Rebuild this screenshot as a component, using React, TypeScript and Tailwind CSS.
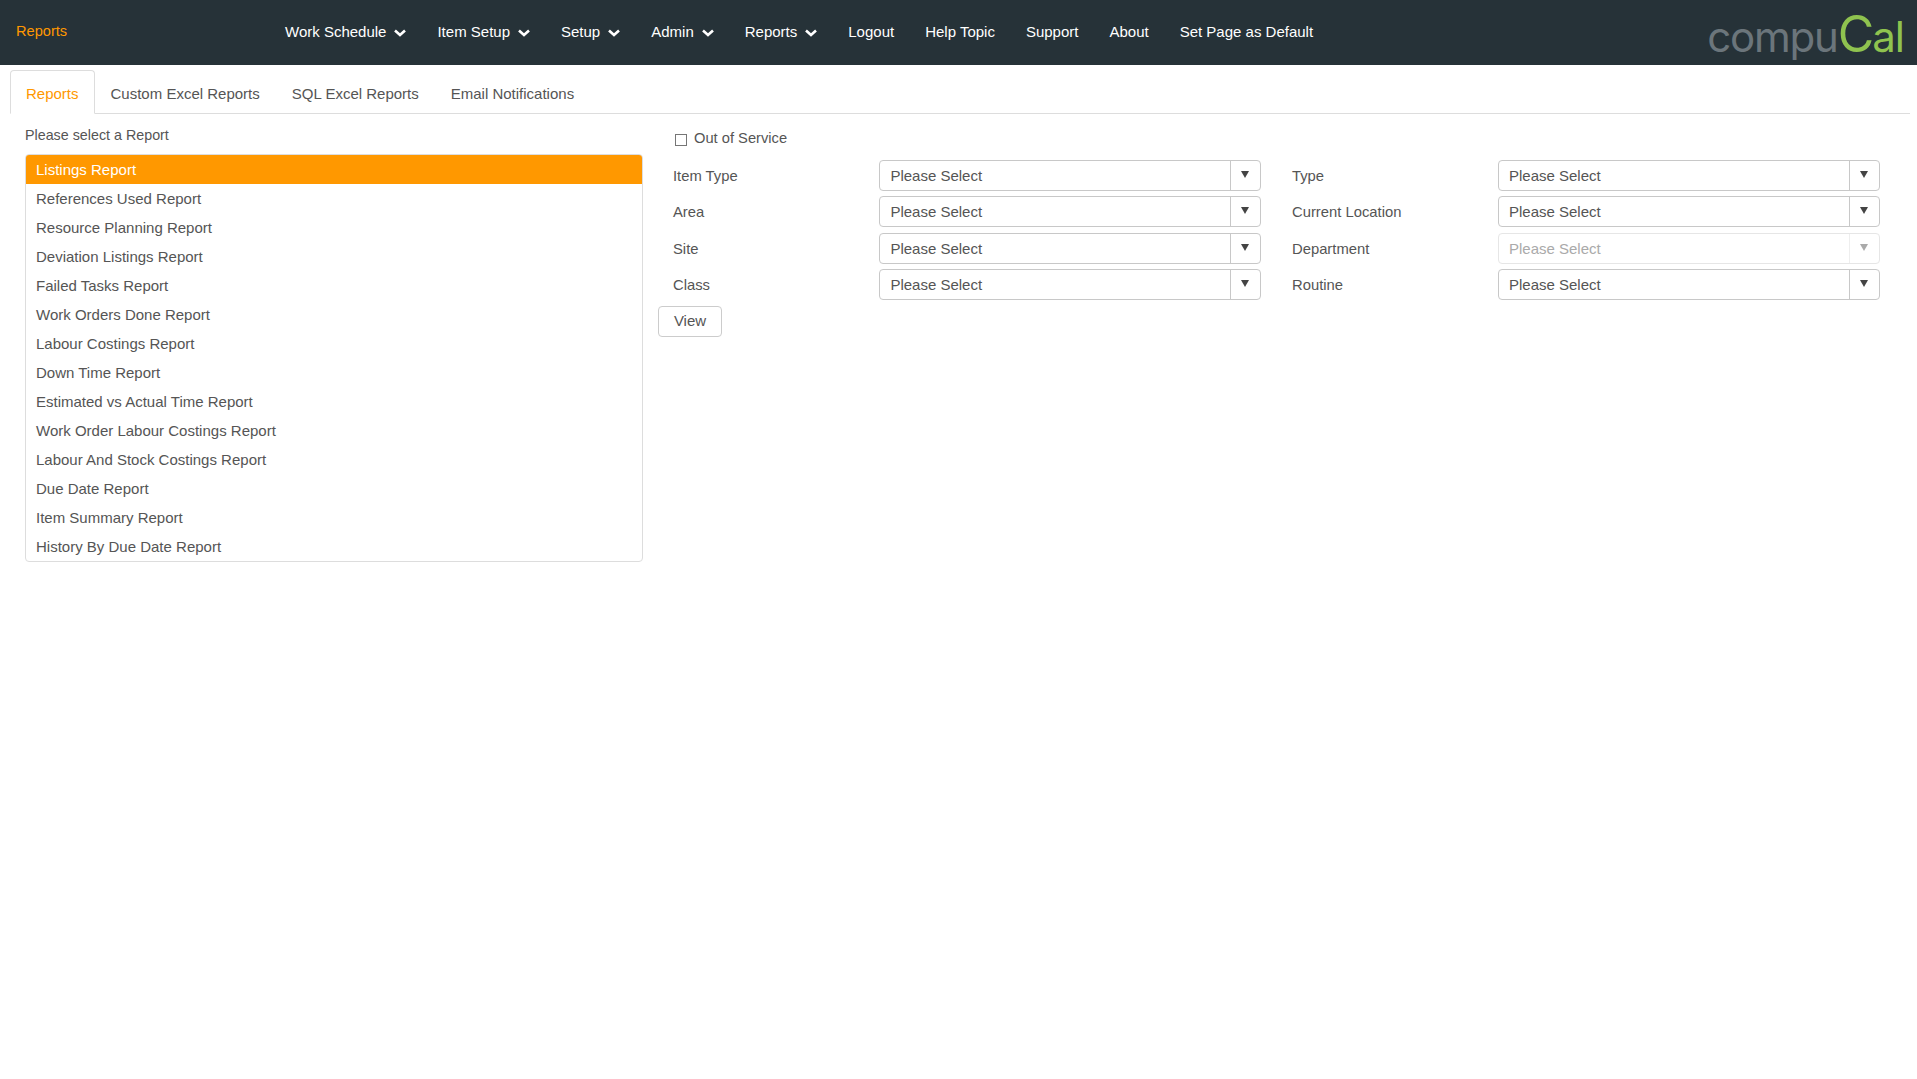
import React from 'react';

const NAV: { label: string; menu?: boolean }[] = [
  { label: 'Work Schedule', menu: true },
  { label: 'Item Setup', menu: true },
  { label: 'Setup', menu: true },
  { label: 'Admin', menu: true },
  { label: 'Reports', menu: true },
  { label: 'Logout' },
  { label: 'Help Topic' },
  { label: 'Support' },
  { label: 'About' },
  { label: 'Set Page as Default' },
];

const REPORTS = [
  'Listings Report',
  'References Used Report',
  'Resource Planning Report',
  'Deviation Listings Report',
  'Failed Tasks Report',
  'Work Orders Done Report',
  'Labour Costings Report',
  'Down Time Report',
  'Estimated vs Actual Time Report',
  'Work Order Labour Costings Report',
  'Labour And Stock Costings Report',
  'Due Date Report',
  'Item Summary Report',
  'History By Due Date Report',
];

const Chevron = () => (
  <svg viewBox="0 0 12 8" className="w-[12px] h-[8px]" fill="none" stroke="currentColor" strokeWidth="2.6">
    <polyline points="1,1.5 6,6 11,1.5" />
  </svg>
);

const Select: React.FC<{ disabled?: boolean }> = ({ disabled }) => (
  <div className={`h-[31px] flex rounded-[4px] border ${disabled ? 'border-[#e6e6e6] text-[#aaaaaa]' : 'border-[#c8c8c8] text-[#555555]'}`}>
    <div className="flex-1 pl-[10px] leading-[29px]">Please Select</div>
    <div className={`w-[30px] flex items-center justify-center border-l ${disabled ? 'border-[#eeeeee]' : 'border-[#c8c8c8]'}`}>
      <span className={`w-0 h-0 mb-[2px] border-x-[4px] border-x-transparent border-t-[7px] ${disabled ? 'border-t-[#aaaaaa]' : 'border-t-[#444444]'}`}></span>
    </div>
  </div>
);

const Row: React.FC<{ left: string; right: string; rightDisabled?: boolean }> = ({ left, right, rightDisabled }) => (
  <>
    <div className="h-[31px] pt-[1px] leading-[30px] text-[14.8px]">{left}</div>
    <Select />
    <div></div>
    <div className="h-[31px] pt-[1px] leading-[30px] text-[14.8px]">{right}</div>
    <Select disabled={rightDisabled} />
  </>
);

export default function App() {
  return (
    <div className="min-h-screen bg-white text-[15px] text-[#555555] font-['Liberation_Sans',Arial,sans-serif]">
      <header className="h-[65px] bg-[#263238] flex items-center relative">
        <div className="w-[285px] pl-[16px] text-[14.6px] text-[#ff9800] mb-[2px]">Reports</div>
        <nav className="flex gap-[31px] text-white">
          {NAV.map((item) => (
            <a key={item.label} className="flex items-center gap-[8px]">
              {item.label}
              {item.menu && <Chevron />}
            </a>
          ))}
        </nav>
        <div className="ml-auto mr-[13px] flex items-baseline font-['Inter',sans-serif] font-normal leading-none mt-[2px]">
          <span className="text-[#6b757b] text-[42px] tracking-[-1.2px]">compu</span>
          <span className="text-[#8fc34f] text-[50px] tracking-[-2px]">C</span>
          <span className="text-[#8fc34f] text-[42px] tracking-[-1px]">al</span>
        </div>
      </header>

      <div className="ml-[10px] mr-[7px] mt-[5px] h-[44px] flex border-b border-[#dddddd]">
        <div className="h-[44px] px-[15px] leading-[46px] text-[#ff9800] bg-white border border-[#dddddd] border-b-white rounded-t-[4px]">Reports</div>
        <div className="px-[16px] leading-[48px]">Custom Excel Reports</div>
        <div className="px-[16px] leading-[48px]">SQL Excel Reports</div>
        <div className="px-[16px] leading-[48px]">Email Notifications</div>
      </div>

      <div className="flex">
        <div className="ml-[25px] w-[618px] pt-[11px]">
          <div className="leading-[20px] mb-[9px] text-[14.3px]">Please select a Report</div>
          <ul className="border border-[#dddddd] rounded-[4px] overflow-hidden">
            {REPORTS.map((r, i) => (
              <li key={r} className={`h-[29px] pl-[10px] leading-[29px] ${i === 0 ? 'bg-[#ff9800] text-white' : ''}`}>{r}</li>
            ))}
          </ul>
        </div>
        <div className="ml-[15px] pt-[14px]">
          <label className="ml-[17px] h-[20px] mb-[12px] flex items-center text-[14.7px] leading-[20px]">
            <span className="w-[12px] h-[12px] mt-[3px] border border-[#767676] bg-white mr-[7px]"></span>
            <span>Out of Service</span>
          </label>
          <div className="ml-[15px] grid grid-cols-[206.4px_381.6px_31px_206px_382px] gap-y-[5.33px]">
            <Row left="Item Type" right="Type" />
            <Row left="Area" right="Current Location" />
            <Row left="Site" right="Department" rightDisabled />
            <Row left="Class" right="Routine" />
          </div>
          <button className="mt-[6px] w-[64px] h-[31px] border border-[#cccccc] rounded-[4px] bg-white text-[#555555]">View</button>
        </div>
      </div>
    </div>
  );
}
